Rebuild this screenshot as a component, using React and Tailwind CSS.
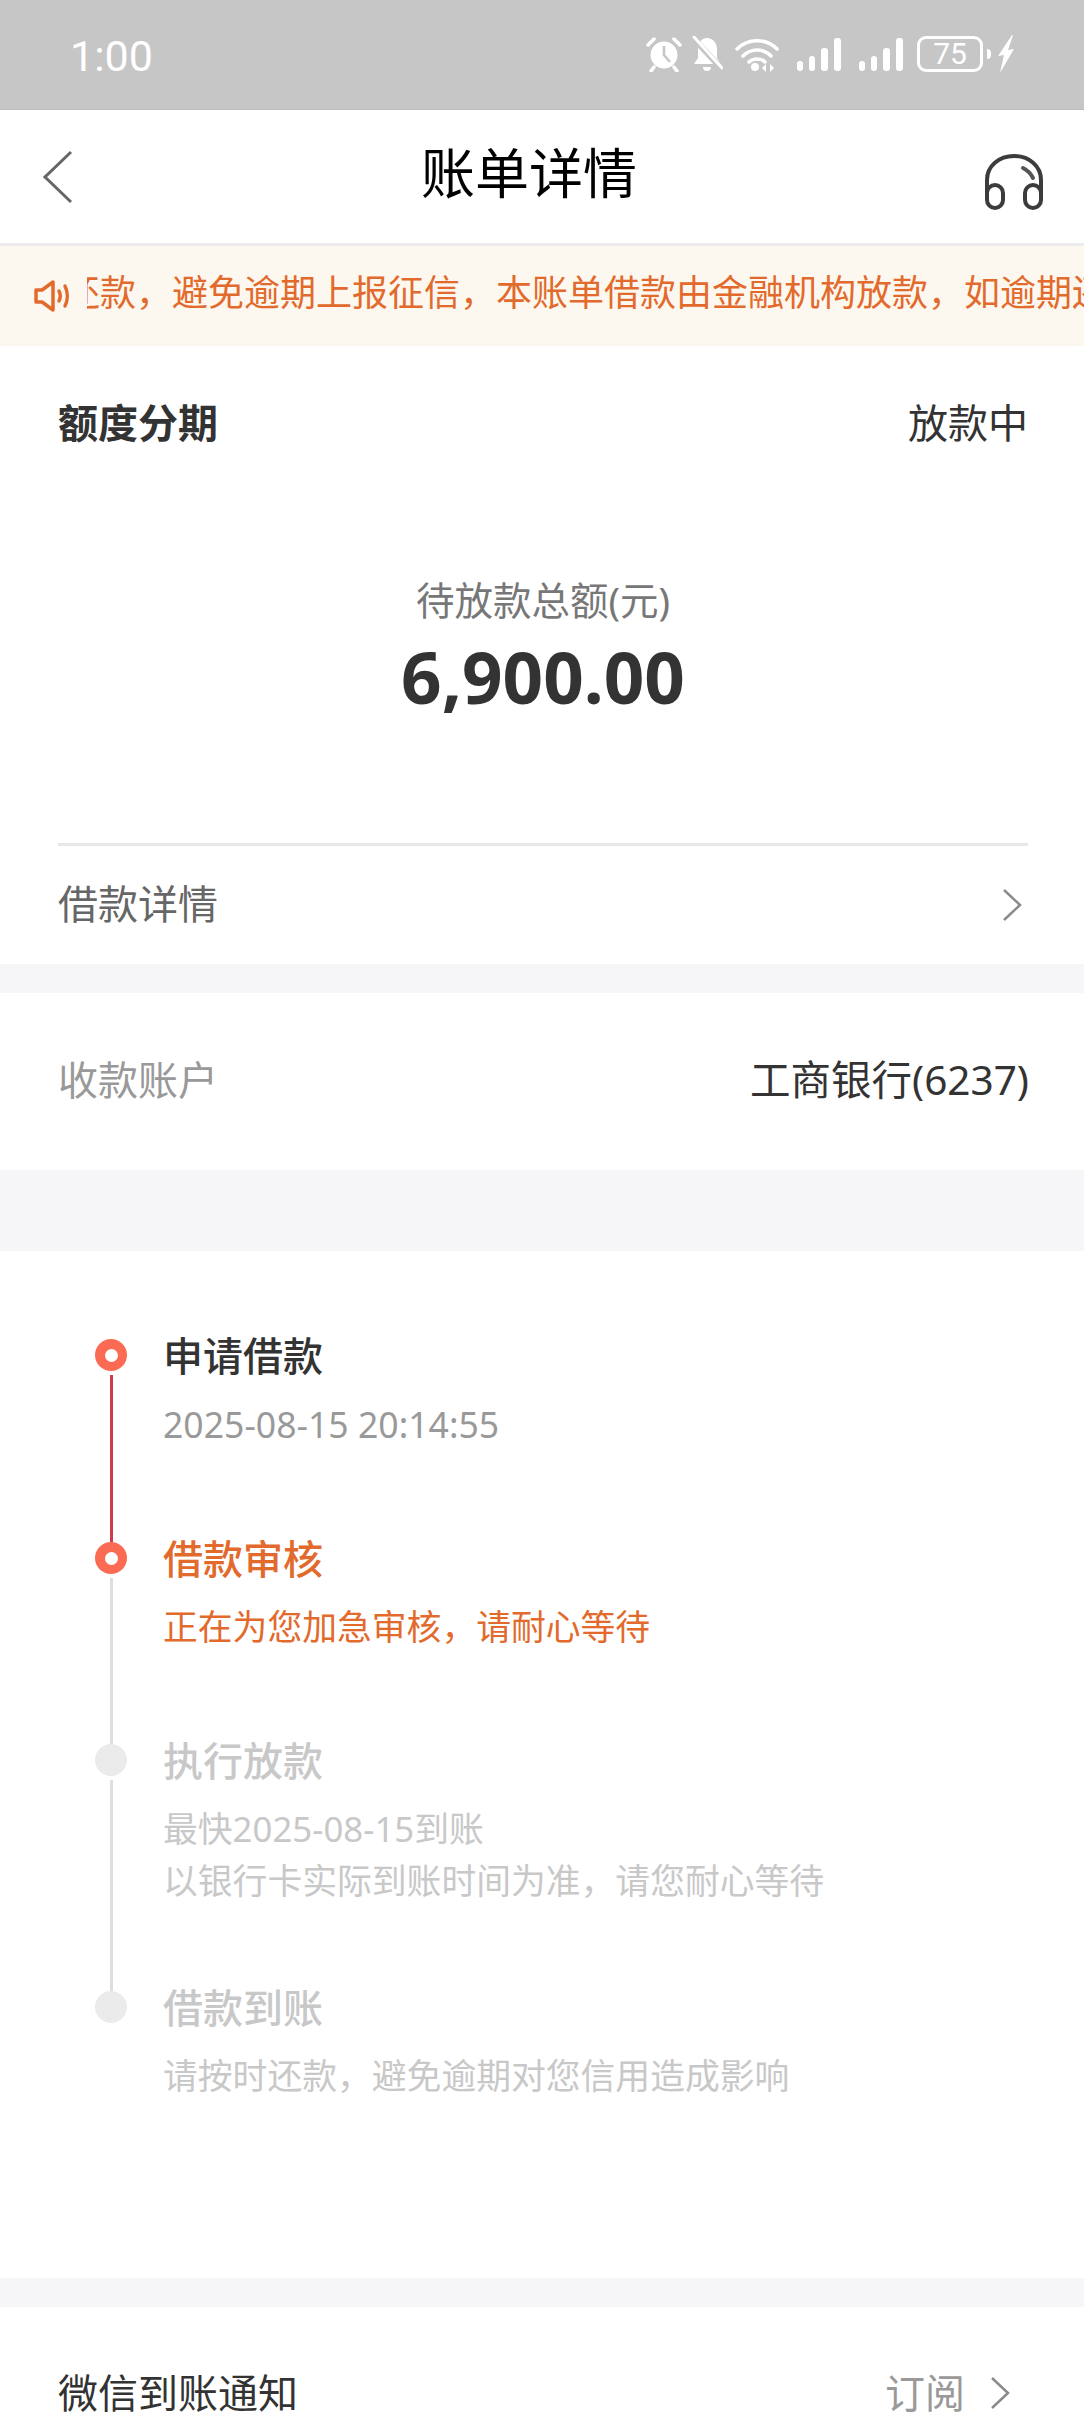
const font = { fontFamily: '"Noto Sans", "Noto Sans CJK SC", sans-serif' };

function Alarm() {
  return (
    <svg width="38" height="36" viewBox="0 0 38 36" fill="none">
      <circle cx="19" cy="19" r="13.5" fill="#fff" />
      <path d="M19 10v9l6 7" stroke="#c6c6c6" strokeWidth="2.5" fill="none" />
      <path d="M3 9l6-6M35 9l-6-6M9 31l-3 4M29 31l3 4" stroke="#fff" strokeWidth="3.5" strokeLinecap="round" />
    </svg>
  );
}

function BellOff() {
  return (
    <svg width="32" height="36" viewBox="0 0 32 36" fill="none">
      <path d="M16 2c6 0 10 5 10 11v9l4 6H3l4-6v-9c0-6 3-11 9-11z" fill="#fff" />
      <path d="M12 31h8a4 4 0 0 1-8 0z" fill="#fff" />
      <path d="M2 2l28 30" stroke="#c6c6c6" strokeWidth="6" />
      <path d="M3 1l28 31" stroke="#fff" strokeWidth="3" strokeLinecap="round" />
    </svg>
  );
}

function Wifi() {
  return (
    <svg width="44" height="36" viewBox="0 0 44 36" fill="none">
      <path d="M2 13C13 2 31 2 42 13" stroke="#fff" strokeWidth="3.5" strokeLinecap="round" />
      <path d="M8 20C16 12 28 12 36 20" stroke="#fff" strokeWidth="3.5" strokeLinecap="round" />
      <path d="M14 26c4-4 12-4 16 0" stroke="#fff" strokeWidth="3.5" strokeLinecap="round" />
      <circle cx="20" cy="31" r="4" fill="#fff" />
      <path d="M31 28l-4 4 4 4zM35 28l4 4-4 4z" fill="#fff" />
    </svg>
  );
}

function Signal() {
  return (
    <svg width="44" height="36" viewBox="0 0 44 36" fill="#fff">
      <rect x="0" y="25" width="6" height="10" rx="3" />
      <rect x="12" y="20" width="6" height="15" rx="3" />
      <rect x="24" y="12" width="7" height="23" rx="3" />
      <rect x="37" y="2" width="7" height="33" rx="3" />
    </svg>
  );
}

function Bolt() {
  return (
    <svg width="18" height="38" viewBox="0 0 18 38" fill="#fff">
      <path d="M15 0L1 21l6-1L3 38l14-24-6 1 5-15z" />
    </svg>
  );
}

function Speaker() {
  return (
    <svg width="36" height="34" viewBox="0 0 36 34" fill="none" stroke="#e26a2c" strokeWidth="3.5" className="shrink-0">
      <path d="M2 11h6l11-8v28l-11-8H2z" strokeLinejoin="round" />
      <path d="M25 12c1.500 3 1.500 7 0 10M31 7c3 6 3 14 0 20" strokeLinecap="round" />
    </svg>
  );
}

function Headset() {
  return (
    <svg width="58" height="56" viewBox="0 0 58 56" fill="none" stroke="#3c3c3c" strokeWidth="4" strokeLinecap="round">
      <path d="M2 42V26C2 12 14 2 29 2s27 10 27 24v16" />
      <rect x="2" y="31" width="16" height="23" rx="8" />
      <rect x="40" y="31" width="16" height="23" rx="8" />
      <path d="M38 14c4 2 8 6 10 10" stroke="#555" />
    </svg>
  );
}

function Chevron({ className }) {
  return (
    <svg width="20" height="34" viewBox="0 0 20 34" fill="none" stroke="#8a8a8a" strokeWidth="2.500" className={className}>
      <path d="M2 2l16 15L2 32" />
    </svg>
  );
}

function Step({ color, line, title, titleColor, lines, textColor, height, textSize = 'text-[34.800px]' }) {
  return (
    <div className="flex" style={{ height }}>
      <div className="w-[105px] flex flex-col items-center shrink-0 pl-[1px]">
        <div className="w-[32px] h-[32px] rounded-full flex items-center justify-center shrink-0" style={{ backgroundColor: color }}>
          {color === '#fb6a52' && <div className="w-[13px] h-[13px] rounded-full bg-white" />}
        </div>
        {line && <div className="w-[3px] flex-1 mt-[4px]" style={{ backgroundColor: line }} />}
      </div>
      <div className="-mt-[9px]">
        <div className="text-[40px] leading-[52px] font-medium" style={{ color: titleColor }}>{title}</div>
        <div className="mt-[16px]">
          {lines.map((t) => (
            <div key={t} className={`${textSize} leading-[52px]`} style={{ color: textColor }}>{t}</div>
          ))}
        </div>
      </div>
    </div>
  );
}

export default function App() {
  return (
    <div className="w-[1084px] h-[2412px] overflow-hidden bg-[#f6f6f8] flex flex-col" style={font}>
      <div className="h-[110px] bg-[#c6c6c6] flex items-center justify-between pl-[70px] pr-[69px] shrink-0 border-b border-[#bcbcbc]">
        <span className="text-white text-[43px] mt-[4px]" style={{ fontFamily: 'Roboto, sans-serif' }}>1:00</span>
        <div className="flex items-center gap-[6px] -mt-[1px]">
          <Alarm />
          <div className="ml-[2px]"><BellOff /></div>
          <div className="ml-[6px]"><Wifi /></div>
          <div className="ml-[12px]"><Signal /></div>
          <div className="ml-[12px]"><Signal /></div>
          <div className="ml-[8px] w-[66px] h-[36px] rounded-[9px] border-[3px] border-white flex items-center justify-center text-white text-[30px] leading-none" style={{ fontFamily: 'Roboto, sans-serif' }}>75</div>
          <div className="-ml-[2px] w-[4px] h-[10px] bg-white rounded-r" />
          <Bolt />
        </div>
      </div>

      <div className="h-[133px] bg-white flex items-center justify-between shrink-0 pl-[41px] pr-[41px]">
        <svg width="34" height="54" viewBox="0 0 34 54" fill="none" stroke="#666" strokeWidth="3">
          <path d="M30 2L4 27l26 25" />
        </svg>
        <span className="text-[54px] text-black -mt-[6px] -ml-[2px]">账单详情</span>
        <div className="mt-[10px]"><Headset /></div>
      </div>

      <div className="h-[3px] bg-[#ececec] shrink-0" />

      <div className="h-[100px] bg-[#fdf8ef] flex items-center shrink-0 overflow-hidden pl-[34px] text-[#e26a2c]">
        <Speaker />
        <div className="ml-[17px] flex-1 min-w-0 overflow-hidden">
          <div className="text-[36px] whitespace-nowrap -ml-[23px] -mt-[6px]">还款，避免逾期上报征信，本账单借款由金融机构放款，如逾期还款</div>
        </div>
      </div>

      <div className="bg-white pl-[58px] pr-[56px] h-[618px] shrink-0 flex flex-col">
        <div className="flex items-center justify-between pt-[50px]">
          <span className="text-[40px] leading-[54px] font-bold text-[#333]">额度分期</span>
          <span className="text-[40px] leading-[54px] text-[#333]">放款中</span>
        </div>
        <div className="text-center text-[38.500px] leading-[54px] text-[#777] mt-[123px]">待放款总额(元)</div>
        <div className="text-center text-[71px] leading-[84px] font-bold text-[#333] mt-[8px]">6,900.00</div>
        <div className="h-[3px] bg-[#e8e8e8] mt-[124px]" />
        <div className="flex items-center justify-between flex-1">
          <span className="text-[40px] text-[#666] -mt-[2px]">借款详情</span>
          <Chevron className="mr-[6px]" />
        </div>
      </div>

      <div className="h-[29px] shrink-0" />

      <div className="h-[177px] bg-white pl-[58px] pr-[55px] flex items-center justify-between shrink-0">
        <span className="text-[40px] text-[#999] -mt-[3px]">收款账户</span>
        <span className="text-[40.500px] text-[#333] -mt-[3px]">工商银行(6237)</span>
      </div>

      <div className="h-[81px] shrink-0" />

      <div className="h-[1027px] bg-white shrink-0 pl-[58px] pt-[88px]">
        <Step color="#fb6a52" line="#d03a4e" title="申请借款" titleColor="#333" lines={['2025-08-15 20:14:55']} textColor="#999" height={203} textSize="text-[35.600px]" />
        <Step color="#fb6a52" line="#dedede" title="借款审核" titleColor="#e26a2c" lines={['正在为您加急审核，请耐心等待']} textColor="#e26a2c" height={202} />
        <Step color="#ebebeb" line="#dedede" title="执行放款" titleColor="#c8c8c8" lines={['最快2025-08-15到账', '以银行卡实际到账时间为准，请您耐心等待']} textColor="#c8c8c8" height={247} />
        <Step color="#ebebeb" title="借款到账" titleColor="#c8c8c8" lines={['请按时还款，避免逾期对您信用造成影响']} textColor="#c8c8c8" height={150} />
      </div>

      <div className="h-[29px] shrink-0" />

      <div className="flex-1 bg-white pl-[58px] pr-[74px] flex justify-between pt-[56px]">
        <span className="text-[40px] leading-[60px] text-[#333]">微信到账通知</span>
        <div className="flex items-center h-[60px] text-[#999]">
          <span className="text-[40px]">订阅</span>
          <Chevron className="ml-[25px]" />
        </div>
      </div>
    </div>
  );
}
